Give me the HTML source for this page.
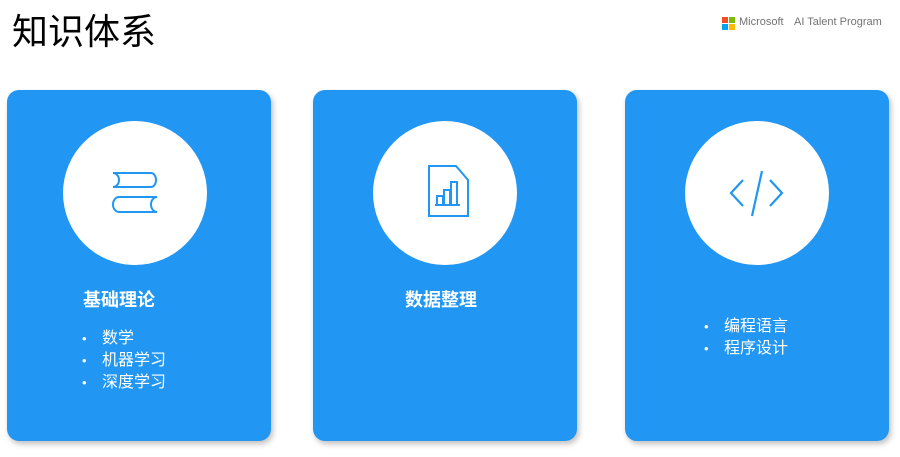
<!DOCTYPE html><html><head><meta charset="utf-8"><style>
body{margin:0;width:900px;height:457px;background:#fff;position:relative;overflow:hidden;font-family:"Liberation Sans","Noto Sans CJK SC",sans-serif}
.t{position:absolute;left:12px;top:3px;font-size:36px;color:#000}
.card{position:absolute;top:90px;width:264px;height:351px;background:#2196f3;border-radius:12px;box-shadow:2px 3px 6px rgba(0,0,0,.25)}
.c{position:absolute;top:31px;left:56px;width:144px;height:144px;border-radius:50%;background:#fff}
.c svg{position:absolute;left:0;top:0}
.h{position:absolute;top:196px;width:100%;color:#fff;font-weight:bold;font-size:18px}
ul{position:absolute;margin:0;padding:0;list-style:none;color:#fff;font-size:16px;line-height:22px}
li:before{content:"•";position:absolute;left:-20px;font-size:13px}
</style></head><body>
<div class="t">知识体系</div>
<div style="position:absolute;left:722px;top:17px;width:14px;height:14px">
<div style="position:absolute;left:0;top:0;width:6px;height:6px;background:#f25022"></div>
<div style="position:absolute;left:7px;top:0;width:6px;height:6px;background:#7fba00"></div>
<div style="position:absolute;left:0;top:7px;width:6px;height:6px;background:#00a4ef"></div>
<div style="position:absolute;left:7px;top:7px;width:6px;height:6px;background:#ffb900"></div></div>
<div style="position:absolute;left:739px;top:16px;font-size:11px;color:#737373">Microsoft</div>
<div style="position:absolute;left:794px;top:16px;font-size:11px;color:#737373">AI Talent Program</div>

<div class="card" style="left:7px">
<div class="c" style="left:56px"><svg width="144" height="144" viewBox="56 31 144 144" fill="none" stroke="#2196f3" stroke-width="2">
<path d="M106 83H144a5 7 0 0 1 0 14H106a6 7 0 0 0 0-14z"/>
<path d="M150 107H112a6 7.5 0 0 0 0 15H150a6 7.5 0 0 1 0-15z"/></svg></div>
<div class="h" style="left:76px;width:auto">基础理论</div>
<ul style="left:95px;top:238px"><li>数学</li><li>机器学习</li><li>深度学习</li></ul>
</div>

<div class="card" style="left:313px">
<div class="c" style="left:60px"><svg width="144" height="144" viewBox="60 31 144 144" fill="none" stroke="#2196f3" stroke-width="2">
<path d="M116 76H143L155 90V126H116Z"/><path d="M124 115V106H130V115M131 115V100H137V115M138 115V92H144V115M122 115H147"/></svg></div>
<div class="h" style="left:92px;width:auto">数据整理</div>
</div>

<div class="card" style="left:625px">
<div class="c" style="left:60px"><svg width="144" height="144" viewBox="60 31 144 144" fill="none" stroke="#2196f3" stroke-width="2.2">
<path d="M118 90L106 103L118 116M145 90L157 103L145 116M137 81L127 126"/></svg></div>
<ul style="left:99px;top:226px"><li>编程语言</li><li>程序设计</li></ul>
</div>
</body></html>
